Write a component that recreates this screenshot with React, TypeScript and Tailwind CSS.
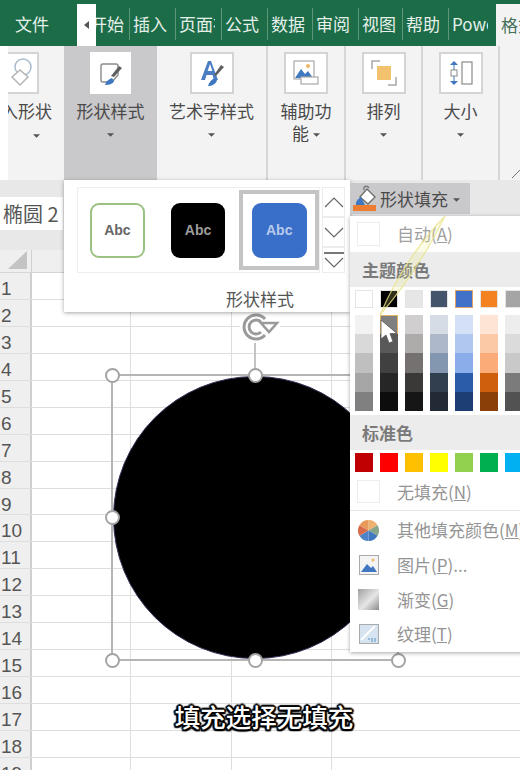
import React from "react";

const cjk = "font-['Noto_Sans_CJK_SC','Noto_Sans',sans-serif]";

const tabs = [
  { label: "插入", w: "w-[46px]" },
  { label: "页面布局", w: "w-[46px]" },
  { label: "公式", w: "w-[46px]" },
  { label: "数据", w: "w-[45px]" },
  { label: "审阅", w: "w-[46px]" },
  { label: "视图", w: "w-[44px]" },
  { label: "帮助", w: "w-[46px]" },
  { label: "Power", w: "w-[48px]" },
];

const themeTop = ["#ffffff", "#000000", "#e7e6e6", "#44546a", "#3f72c8", "#f58220", "#a5a5a5"];
const themeShades = [
  ["#f2f2f2", "#d9d9d9", "#bfbfbf", "#a6a6a6", "#808080"],
  ["#7f7f7f", "#595959", "#404040", "#262626", "#0d0d0d"],
  ["#d0cece", "#aeabab", "#767171", "#3b3838", "#171616"],
  ["#d6dce5", "#adb9ca", "#8497b0", "#323f4f", "#222a35"],
  ["#d3e0f5", "#b0c8ef", "#8badea", "#2a5caa", "#1c3e75"],
  ["#fde4d4", "#fcc9a6", "#fbab78", "#cf5f0c", "#8a3f08"],
  ["#ededed", "#dbdbdb", "#c9c9c9", "#7b7b7b", "#525252"],
];
const standard = ["#c00000", "#ff0000", "#ffc000", "#ffff00", "#92d050", "#00b050", "#00b0f0"];

const rows = Array.from({ length: 19 }, (_, i) => i + 1);

const Caret = () => (
  <svg width="7" height="4" viewBox="0 0 8 4" className="inline-block align-middle">
    <path d="M0 0h8L4 4z" fill="#555" />
  </svg>
);

const RibbonGroup = ({
  w,
  label,
  icon,
  active,
  plain,
  boxW = "w-[44px]",
}: {
  w: string;
  label: React.ReactNode;
  icon: React.ReactNode;
  active?: boolean;
  plain?: boolean;
  boxW?: string;
}) => (
  <div
    className={`${w} h-full flex flex-col items-center pt-[6px] shrink-0 ${
      active ? "bg-[#c9c8ca]" : "border-r-2 border-[#d6d6d6]"
    }`}
  >
    <div
      className={`${boxW} h-[42px] bg-white flex items-center justify-center shrink-0 ${
        plain ? "" : "border-2 border-[#d4d4d4]"
      }`}
    >
      {icon}
    </div>
    <div className="mt-[6px] text-[17px] leading-[22px] text-[#4a4a4a] text-center whitespace-nowrap">{label}</div>
  </div>
);

const Handle = ({ cls }: { cls: string }) => (
  <div className={`absolute w-[15px] h-[15px] rounded-full bg-white border-[2.5px] border-[#a3a3a3] ${cls}`} />
);

const AbcCard = ({ cls, text }: { cls: string; text: string }) => (
  <div className={`w-[55px] h-[55px] rounded-[9px] flex items-center justify-center text-[14px] font-bold font-['Liberation_Sans',sans-serif] ${cls} ${text}`}>
    Abc
  </div>
);

const MenuRow = ({ icon, label, hot, tail }: { icon: React.ReactNode; label: string; hot: string; tail?: string }) => (
  <div className="h-[34.6px] flex items-center">
    <div className="w-[37px] flex justify-center shrink-0">{icon}</div>
    <div className="ml-[10px] text-[17px] text-[#949494] whitespace-nowrap">
      {label}(<span className="underline">{hot}</span>
      {tail ?? ")"}
    </div>
  </div>
);

export default function App() {
  return (
    <div className={`relative w-[520px] h-[770px] overflow-hidden bg-white ${cjk}`}>
      {/* tab strip */}
      <div className="h-[46px] bg-[#1c6c47] flex text-[17px] text-[#e6f0eb]">
        <div className="w-[77px] flex items-center pl-[15px] pt-[2px]">文件</div>
        <div className="w-[19px] mt-[4px] bg-white flex items-center justify-center">
          <svg width="5" height="8" viewBox="0 0 5 8">
            <path d="M5 0v8L0 4z" fill="#555" />
          </svg>
        </div>
        <div className="w-[33px] overflow-hidden flex justify-end items-center pt-[2px] pr-[5px] whitespace-nowrap">开始</div>
        {tabs.map((t) => (
          <div key={t.label} className={`${t.w} flex items-center pt-[2px] pl-[4px] relative`}>
            <div className="absolute left-0 top-[8px] bottom-[6px] w-px bg-[#5d9678]" />
            <div className="overflow-hidden whitespace-nowrap w-[36px]">{t.label}</div>
          </div>
        ))}
        <div className="flex-1 mt-[4px] bg-[#f4f3f4] text-[#44705a] pl-[5px] flex items-center whitespace-nowrap overflow-hidden">格式</div>
      </div>

      {/* ribbon */}
      <div className="h-[134px] bg-[#f4f3f4] flex">
        <div className="w-[8px] bg-white shrink-0" />
        <div className="w-[56px] h-full flex flex-col pt-[6px] shrink-0 overflow-hidden">
          <div className="w-[31px] h-[42px] bg-white border-2 border-l-0 border-[#d4d4d4] flex items-center justify-center shrink-0">
            <svg width="26" height="32" viewBox="0 0 26 32" fill="none" strokeWidth="1.5">
              <circle cx="13" cy="10" r="8" stroke="#a9bcd0" />
              <path d="M2 20l8-7 8 7-8 8z" stroke="#b5b5b5" fill="#fff" />
            </svg>
          </div>
          <div className="mt-[6px] pr-[12px] flex justify-end text-[17px] leading-[22px] text-[#4a4a4a] whitespace-nowrap">入形状</div>
          <div className="leading-[22px] pl-[25px]"><Caret /></div>
        </div>
        <RibbonGroup
          w="w-[93px]"
          active
          plain
          boxW="w-[41px]"
          label={<>形状样式<br /><Caret /></>}
          icon={
            <svg width="26" height="30" viewBox="0 0 26 30" fill="none">
              <path d="M5 6h13a2 2 0 0 1 2 2v9l-6 7H5a2 2 0 0 1-2-2V8a2 2 0 0 1 2-2z" stroke="#8a8a8a" strokeWidth="1.4" />
              <path d="M24 10l-8 9-3-1 8-10z" fill="#5f5f5f" />
              <path d="M7 27c1-4 4-6 7-7l2 3c-1 3-5 4-9 4z" fill="#3f78c0" />
            </svg>
          }
        />
        <RibbonGroup
          w="w-[111px]"
          label={<>艺术字样式<br /><Caret /></>}
          icon={
            <svg width="28" height="30" viewBox="0 0 28 30" fill="none">
              <path d="M3 22L10 3h3l7 19h-4l-1.500-5H8.500L7 22zM9.600 13h4.800L12 6z" fill="#4a7dc4" />
              <path d="M26 9l-8 9-2-1 7-10z" fill="#5f5f5f" />
              <path d="M10 28c1-4 4-7 7-8l2 2c-1 4-5 6-9 6z" fill="#3f78c0" />
            </svg>
          }
        />
        <RibbonGroup
          w="w-[78px]"
          label={<>辅助功<br />能 <Caret /></>}
          icon={
            <svg width="26" height="26" viewBox="0 0 26 26" fill="none">
              <rect x="1" y="1" width="20" height="18" fill="#fff" stroke="#a8a8a8" strokeWidth="1.2" />
              <circle cx="15" cy="6" r="2" fill="#f0b860" />
              <path d="M2 18l6-9 4 5 3-3 5 7z" fill="#3f78c0" />
              <rect x="8" y="17" width="17" height="7" fill="#fff" stroke="#a8a8a8" strokeWidth="1.2" />
            </svg>
          }
        />
        <RibbonGroup
          w="w-[77px]"
          label={<>排列<br /><Caret /></>}
          icon={
            <svg width="26" height="26" viewBox="0 0 26 26" fill="none">
              <path d="M1 9V1h8" stroke="#a8a8a8" strokeWidth="1.5" />
              <path d="M25 17v8h-8" stroke="#a8a8a8" strokeWidth="1.5" />
              <rect x="6" y="6" width="14" height="14" fill="#f2c26e" />
            </svg>
          }
        />
        <RibbonGroup
          w="w-[77px]"
          label={<>大小<br /><Caret /></>}
          icon={
            <svg width="24" height="24" viewBox="0 0 24 24" fill="none">
              <rect x="13" y="1" width="10" height="22" fill="#fff" stroke="#8a8a8a" strokeWidth="1.2" />
              <path d="M5 3v18" stroke="#3f78c0" strokeWidth="1" />
              <path d="M1 4l4-4 4 4zM1 20l4 4 4-4z" fill="#3f78c0" />
              <rect x="2" y="9" width="6" height="6" fill="#fff" stroke="#8a8a8a" />
            </svg>
          }
        />
        <div className="flex-1 relative">
          <svg width="8" height="8" viewBox="0 0 8 8" className="absolute left-[12px] bottom-[2px]">
            <path d="M0 8L8 0" stroke="#777" strokeWidth="1" />
          </svg>
        </div>
      </div>

      {/* name box band */}
      <div className="h-[70px] bg-[#e8e8e8] pt-[17px]">
        <div className="w-[63px] h-[33px] bg-white text-[20px] leading-[33px] pl-[3px] text-[#555] whitespace-nowrap overflow-hidden">椭圆 2</div>
      </div>

      {/* sheet */}
      <div className="h-[23px] bg-[#efefef] flex border-b border-[#d5d5d5]">
        <div className="w-[32px] border-r border-[#cfcfcf] flex items-end justify-end pr-[4px] pb-[3px]">
          <svg width="19" height="18" viewBox="0 0 19 18">
            <path d="M19 0v18H0z" fill="#c4c4c4" />
          </svg>
        </div>
      </div>
      {rows.map((r) => (
        <div key={r} className="h-[26.95px] flex border-b border-[#dedede]">
          <div className="w-[32px] bg-[#efefef] border-r-2 border-[#cfcfcf] text-[19px] leading-[27px] pt-[2px] pl-[1px] text-[#555] font-['Liberation_Sans',sans-serif] shrink-0">
            {r}
          </div>
          <div className="w-[99px] border-r border-[#dedede]" />
          <div className="w-[101px] border-r border-[#dedede]" />
          <div className="w-[100px] border-r border-[#dedede]" />
          <div className="flex-1" />
        </div>
      ))}

      {/* shape with its selection frame */}
      <div className="absolute left-[111px] top-[374px] w-[288px] h-[287px] border-2 border-[#b5b5b5]">
        <div className="absolute left-0 top-0 w-[284px] h-[283px] rounded-full bg-black border border-[#33335a]" />
        <div className="absolute left-[141px] top-[-50px] w-[2px] h-[50px] bg-[#c4c4c4]" />
        <Handle cls="left-[-8.5px] top-[-8.5px]" />
        <Handle cls="left-[134.5px] top-[-8.5px]" />
        <Handle cls="left-[-8.5px] top-[133.5px]" />
        <Handle cls="left-[-8.5px] top-[276.5px]" />
        <Handle cls="left-[134.5px] top-[276.5px]" />
        <Handle cls="left-[277.5px] top-[276.5px]" />
      </div>
      <svg width="40" height="32" viewBox="0 0 40 32" fill="none" className="absolute left-[240px] top-[311px] bg-white">
        <path d="M25 24a12 12 0 1 1 0-16" stroke="#9a9a9a" strokeWidth="3" />
        <path d="M21 21a7 7 0 1 1 0-10" stroke="#9a9a9a" strokeWidth="3" />
        <path d="M21 12h16l-8 9z" fill="#fff" stroke="#9a9a9a" strokeWidth="2.500" />
      </svg>

      {/* shape styles gallery popup */}
      <div className="absolute left-[64px] top-[180px] w-[286px] h-[132px] bg-white shadow-[0_1px_4px_rgba(0,0,0,0.35)] pl-[13px] pt-[7px]">
        <div className="flex h-[86px]">
          <div className="w-[243px] border border-[#efefef] flex items-center pl-[12px] gap-[26px]">
            <AbcCard cls="bg-white border-2 border-[#9cc283]" text="text-[#666]" />
            <AbcCard cls="bg-black" text="text-[#9c9c9c]" />
            <div className="w-[80px] h-[80px] -ml-[12px] border-[4px] border-[#c4c4c4] flex items-center justify-center">
              <AbcCard cls="bg-[#3a6fc9]" text="text-[#b7c9ea]" />
            </div>
          </div>
          <div className="w-[23px] ml-[2px] flex flex-col text-[#555]">
            <div className="h-[30px] border border-[#ececec] flex items-center justify-center">
              <svg width="20" height="11" viewBox="0 0 20 11" fill="none"><path d="M1 10l9-9 9 9" stroke="#666" strokeWidth="1.2" /></svg>
            </div>
            <div className="h-[30px] border border-[#ececec] flex items-center justify-center">
              <svg width="20" height="11" viewBox="0 0 20 11" fill="none"><path d="M1 1l9 9 9-9" stroke="#666" strokeWidth="1.2" /></svg>
            </div>
            <div className="h-[26px] border border-[#ececec] flex flex-col items-center justify-center gap-[3px]">
              <div className="w-[20px] h-[2px] bg-[#777]" />
              <svg width="20" height="11" viewBox="0 0 20 11" fill="none"><path d="M1 1l9 9 9-9" stroke="#666" strokeWidth="1.2" /></svg>
            </div>
          </div>
        </div>
        <div className="mt-[14px] ml-[149px] text-[17px] leading-[24px] text-[#555] whitespace-nowrap">形状样式</div>
      </div>

      {/* shape fill button */}
      <div className="absolute left-[350px] top-[183px] w-[120px] h-[31px] bg-[#c9c8ca] flex items-center pl-[3px] text-[17px] text-[#4a4a4a] whitespace-nowrap">
        <svg width="24" height="27" viewBox="0 0 24 27" className="shrink-0">
          <path d="M7 12l7-8 8 8-7 7z" fill="#fff" stroke="#6f6f6f" strokeWidth="1.400" />
          <path d="M11 5c-1-4 3-5 5-2" fill="none" stroke="#6f6f6f" strokeWidth="1.200" />
          <path d="M8 12c-3 2-6 5-5 8h9z" fill="#3f78c0" />
          <rect x="0" y="20" width="23" height="6" fill="#ed7d31" />
        </svg>
        <span className="ml-[3px]">形状填充</span>
        <span className="ml-[5px] mb-[2px]"><Caret /></span>
      </div>

      {/* fill menu */}
      <div className="absolute left-[350px] top-[216px] w-[180px] h-[436px] bg-white shadow-[0_1px_4px_rgba(0,0,0,0.35)]">
        <div className="h-[36px] flex items-center">
          <div className="w-[37px] flex justify-center shrink-0">
            <div className="w-[23px] h-[24px] border border-[#ededed]" />
          </div>
          <div className="ml-[10px] text-[17px] text-[#a0a0a0]">自动(<span className="underline">A</span>)</div>
        </div>
        <div className="h-[35px] bg-[#ececec] pl-[12px] text-[17px] font-bold leading-[35px] text-[#7a7a7a]">主题颜色</div>
        <div className="flex gap-[7px] pl-[5px] pt-[3px]">
          {themeTop.map((c, i) => (
            <div
              key={c}
              className={`w-[18px] h-[18px] shrink-0 border ${i === 4 ? "border-[#e0a063]" : "border-[#e4e4e4]"}`}
              style={{ backgroundColor: c }}
            />
          ))}
        </div>
        <div className="flex gap-[7px] pl-[5px] pt-[7px]">
          {themeShades.map((col, i) => (
            <div key={i} className="w-[18px] shrink-0 flex flex-col">
              {col.map((c, j) => (
                <div
                  key={c}
                  className={`h-[19.2px] ${i === 1 && j === 0 ? "border border-[#e0b063]" : ""}`}
                  style={{ backgroundColor: c }}
                />
              ))}
            </div>
          ))}
        </div>
        <div className="mt-[4px] h-[35px] bg-[#ececec] pl-[12px] text-[17px] font-bold leading-[35px] text-[#7a7a7a]">标准色</div>
        <div className="flex gap-[7px] pl-[5px] pt-[3px]">
          {standard.map((c) => (
            <div key={c} className="w-[18px] h-[19px] shrink-0" style={{ backgroundColor: c }} />
          ))}
        </div>
        <div className="h-[38px] flex items-center mt-[1px] border-b border-[#e6e6e6]">
          <div className="w-[37px] flex justify-center shrink-0">
            <div className="w-[23px] h-[23px] border border-[#ededed]" />
          </div>
          <div className="ml-[10px] text-[17px] text-[#949494]">无填充(<span className="underline">N</span>)</div>
        </div>
        <div className="pt-[2px]">
          <MenuRow
            label="其他填充颜色"
            hot="M"
            icon={
              <svg width="21" height="21" viewBox="0 0 22 22">
                <path d="M11 11V0a11 11 0 0 1 9.500 5.500z" fill="#f0b070" />
                <path d="M11 11l9.500-5.500A11 11 0 0 1 20.500 16.500z" fill="#86a58a" />
                <path d="M11 11l9.500 5.500A11 11 0 0 1 11 22z" fill="#3f78c0" />
                <path d="M11 11v11a11 11 0 0 1-9.500-5.500z" fill="#4f83c8" />
                <path d="M11 11L1.500 16.500a11 11 0 0 1 0-11z" fill="#d96a4a" />
                <path d="M11 11L1.500 5.500A11 11 0 0 1 11 0z" fill="#e89a5a" />
              </svg>
            }
          />
          <MenuRow
            label="图片"
            hot="P"
            tail=")..."
            icon={
              <svg width="20" height="20" viewBox="0 0 20 20">
                <rect x="0.500" y="0.500" width="19" height="19" fill="#f4f4f4" stroke="#aaa" />
                <circle cx="14" cy="5" r="1.500" fill="#eeb868" />
                <path d="M2 17l6-8 4 4 2-2 4 6z" fill="#3f78c0" />
              </svg>
            }
          />
          <MenuRow
            label="渐变"
            hot="G"
            icon={
              <svg width="21" height="21" viewBox="0 0 22 22">
                <defs>
                  <linearGradient id="gradFill" x1="0" y1="0" x2="1" y2="1">
                    <stop offset="0" stopColor="#a0a0a0" />
                    <stop offset="0.550" stopColor="#e6e6e6" />
                    <stop offset="1" stopColor="#8a8a8a" />
                  </linearGradient>
                </defs>
                <rect width="22" height="22" fill="url(#gradFill)" />
              </svg>
            }
          />
          <MenuRow
            label="纹理"
            hot="T"
            icon={
              <svg width="20" height="20" viewBox="0 0 20 20">
                <rect x="0.500" y="0.500" width="19" height="19" fill="#d6e3f0" stroke="#aaa" />
                <path d="M2 16L16 2" stroke="#fff" strokeWidth="2" />
                <path d="M9 15h9M12 17h6" stroke="#5c8fc4" strokeWidth="1" strokeDasharray="2 1" />
              </svg>
            }
          />
        </div>
      </div>

      {/* cursor trail and pointer */}
      <svg width="80" height="110" viewBox="0 0 80 110" className="absolute left-[375px] top-[215px]" fill="#eeea80" fillOpacity="0.2" stroke="#e8e48a" strokeOpacity="0.8" strokeWidth="1.2">
        <path d="M70 1C50 22 24 55 5 100C24 78 50 42 70 1z" />
      </svg>
      <svg width="18" height="26" viewBox="0 0 18 26" className="absolute left-[380px] top-[319px]">
        <path d="M1 1v19l5-4 3 8 4-1.500-3-8h7z" fill="#fff" stroke="#555" strokeWidth="0.800" />
      </svg>

      {/* subtitle */}
      <div className="absolute left-0 w-[528px] top-[698px] text-center text-[25.5px] leading-[36px] font-medium text-white [text-shadow:0_0_3px_#000,1.5px_1.5px_1px_#000,-1.5px_-1.5px_1px_#000,1.5px_-1.5px_1px_#000,-1.5px_1.5px_1px_#000,0_2px_1px_#000,0_-2px_1px_#000,2px_0_1px_#000,-2px_0_1px_#000]">
        填充选择无填充
      </div>
    </div>
  );
}
